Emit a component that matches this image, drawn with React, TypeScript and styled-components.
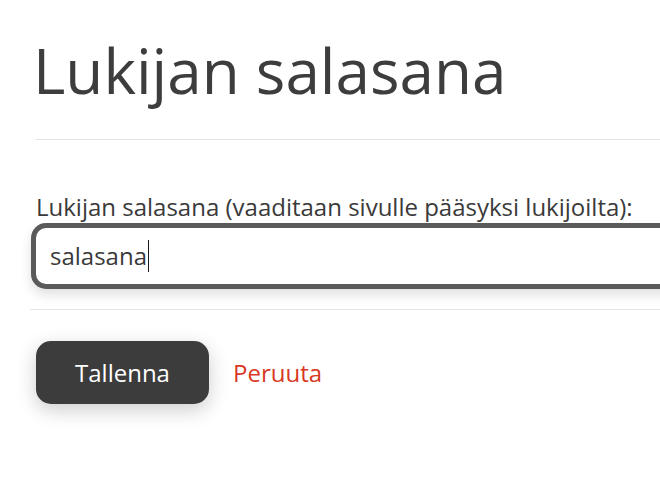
import { useState } from "react";
import styled, { createGlobalStyle } from "styled-components";

const GlobalStyle = createGlobalStyle`
  html, body {
    margin: 0;
    padding: 0;
    background: #ffffff;
    overflow: hidden;
  }
  body {
    font-family: "Open Sans", "Noto Sans", sans-serif;
    color: #3b3b3b;
  }
  * {
    box-sizing: border-box;
  }
`;

const App = () => {
  const [password, setPassword] = useState("salasana");

  return (
    <Page>
      <GlobalStyle />
      <Header>
        <h1>Lukijan salasana</h1>
      </Header>
      <Divider $inset={36} $top={32} />

      <Form onSubmit={(e) => e.preventDefault()}>
        <Label htmlFor="reader-password">
          Lukijan salasana (vaaditaan sivulle pääsyksi lukijoilta):
        </Label>
        <Field>
          <FieldInput
            id="reader-password"
            type="text"
            value={password}
            size={Math.max(password.length, 1)}
            onChange={(e) => setPassword(e.target.value)}
          />
          <Caret />
        </Field>
        <Divider $inset={30} $top={20} />

        <Actions>
          <SaveButton type="submit">Tallenna</SaveButton>
          <CancelLink href="#">Peruuta</CancelLink>
        </Actions>
      </Form>
    </Page>
  );
};

export default App;

const Page = styled.div`
  width: 100%;
  overflow: hidden;
  padding: 33px 0 60px;
`;

const Header = styled.div`
  padding-left: 33px;

  h1 {
    margin: 0;
    font-size: 62px;
    font-weight: 400;
    line-height: 1.2;
    color: #3d3d3d;
  }
`;

const Divider = styled.hr<{ $inset: number; $top: number }>`
  margin: ${(p) => p.$top}px 0 0 ${(p) => p.$inset}px;
  border: none;
  height: 1px;
  background-color: #e4e4e4;
`;

const Form = styled.form`
  display: flex;
  flex-direction: column;
  margin-top: 51px;
`;

const Label = styled.label`
  padding-left: 36px;
  font-size: 24px;
  line-height: 1.3;
  color: #3a3a3a;
`;

const Field = styled.div`
  display: flex;
  align-items: center;
  margin-left: 31px;
  width: 720px;
  flex-shrink: 0;
  height: 66px;
  padding: 0 14px;
  border: 5px solid #5a5a5a;
  border-radius: 15px;
  background: #ffffff;
  box-shadow: 0 6px 12px rgba(0, 0, 0, 0.12);
  cursor: text;
`;

const FieldInput = styled.input`
  field-sizing: content;
  min-width: 0;
  padding: 0;
  border: none;
  outline: none;
  background: transparent;
  font-family: inherit;
  font-size: 24px;
  color: #3a3a3a;
  caret-color: transparent;
`;

const Caret = styled.span`
  flex-shrink: 0;
  width: 1px;
  height: 32px;
  margin-left: 1px;
  background-color: #1a1a1a;
`;

const Actions = styled.div`
  display: flex;
  align-items: center;
  gap: 24px;
  margin-top: 31px;
  padding-left: 36px;
`;

const SaveButton = styled.button`
  width: 173px;
  height: 63px;
  border: none;
  border-radius: 15px;
  background-color: #3c3c3c;
  color: #ffffff;
  font-family: inherit;
  font-size: 24px;
  cursor: pointer;
  box-shadow: 0 6px 20px rgba(0, 0, 0, 0.2);
`;

const CancelLink = styled.a`
  font-size: 24px;
  color: #d8381f;
  text-decoration: none;
`;
